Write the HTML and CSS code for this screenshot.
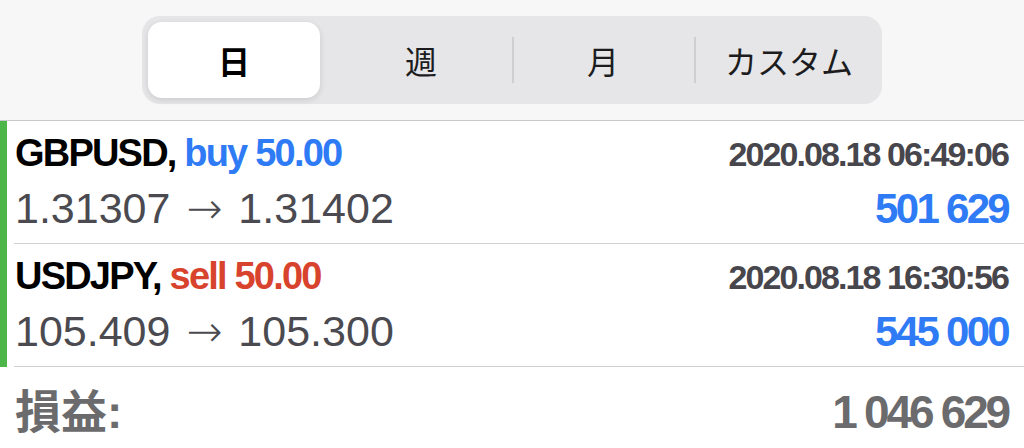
FILE: index.html
```html
<!DOCTYPE html>
<html lang="ja">
<head>
  <meta charset="UTF-8">
  <meta name="viewport" content="width=device-width, initial-scale=1.0">
  <link rel="stylesheet" href="styles.css">
  <title>履歴</title>
</head>
<body>
  <div class="header">
    <div class="segmented">
      <div class="seg active">日</div>
      <div class="seg">週</div>
      <div class="seg divided">月</div>
      <div class="seg divided">カスタム</div>
    </div>
  </div>
  <div class="trades">
    <div class="trade">
      <div class="line">
        <span class="title">GBPUSD, <span class="buy">buy 50.00</span></span>
        <span class="time">2020.08.18 06:49:06</span>
      </div>
      <div class="line">
        <span class="prices">1.31307 <span class="arrow">→</span> 1.31402</span>
        <span class="profit">501 629</span>
      </div>
    </div>
    <div class="trade">
      <div class="line">
        <span class="title">USDJPY, <span class="sell">sell 50.00</span></span>
        <span class="time">2020.08.18 16:30:56</span>
      </div>
      <div class="line">
        <span class="prices">105.409 <span class="arrow">→</span> 105.300</span>
        <span class="profit">545 000</span>
      </div>
    </div>
  </div>
  <div class="summary">
    <span>損益:</span>
    <span class="value">1 046 629</span>
  </div>
  <div class="summary">
    <span>スワップ:</span>
    <span class="value">0</span>
  </div>
</body>
</html>
```

FILE: styles.css
```css
body {
  margin: 0;
  padding: 0;
  background: #fff;
  color: #000;
  font-family: "Liberation Sans", "Noto Sans CJK JP", sans-serif;
  overflow: hidden;
}
.header {
  background: #f7f7f7;
  height: 121px;
  padding-top: 16px;
  box-sizing: border-box;
  border-bottom: 1px solid #c8c8cc;
  display: flex;
  justify-content: center;
}
.segmented {
  width: 740px;
  height: 88px;
  box-sizing: border-box;
  padding: 6px;
  background: #e6e6e8;
  border-radius: 18px;
  display: grid;
  grid-template-columns: repeat(4, 1fr);
}
.seg {
  position: relative;
  display: flex;
  align-items: center;
  justify-content: center;
  font-family: "Noto Sans CJK JP", sans-serif;
  font-size: 32px;
  color: #1c1c1e;
}
.seg.active {
  background: #fff;
  border-radius: 14px;
  margin-right: 10px;
  font-weight: 700;
  color: #000;
  box-shadow: 0 2px 6px rgba(0, 0, 0, 0.12);
}
.seg.divided::before {
  content: "";
  position: absolute;
  left: 0;
  top: 15px;
  bottom: 15px;
  width: 2px;
  background: #cfcfd2;
}
.seg:last-child {
  padding-left: 8px;
}
.trades {
  border-left: 7px solid #4cb748;
}
.trade {
  margin-left: 7px;
  padding: 9px 16px 7px 1px;
  border-bottom: 1px solid #d0d0d2;
}
.line {
  display: flex;
  justify-content: space-between;
  align-items: baseline;
}
.line:first-child {
  height: 46px;
  line-height: 46px;
  margin-bottom: 4px;
}
.line:last-child {
  height: 56px;
  line-height: 56px;
}
.title {
  font-size: 38px;
  font-weight: 700;
  letter-spacing: -1.8px;
}
.buy {
  color: #2f7bf5;
}
.sell {
  color: #d8432d;
}
.time {
  font-size: 34px;
  font-weight: 700;
  letter-spacing: -1.9px;
  color: #46464c;
}
.prices {
  font-size: 43px;
  color: #4a4a50;
}
.arrow {
  font-family: "DejaVu Sans", sans-serif;
  font-weight: 300;
  margin: 0 4px;
}
.profit {
  font-size: 42px;
  font-weight: 700;
  letter-spacing: -2.7px;
  color: #2f7bf5;
}
.summary {
  display: flex;
  justify-content: space-between;
  align-items: baseline;
  padding: 17px 16px 0 15px;
  height: 56px;
  line-height: 56px;
  font-size: 46px;
  font-weight: 700;
  color: #6b6b6d;
}
.summary .value {
  letter-spacing: -3.2px;
}
```
